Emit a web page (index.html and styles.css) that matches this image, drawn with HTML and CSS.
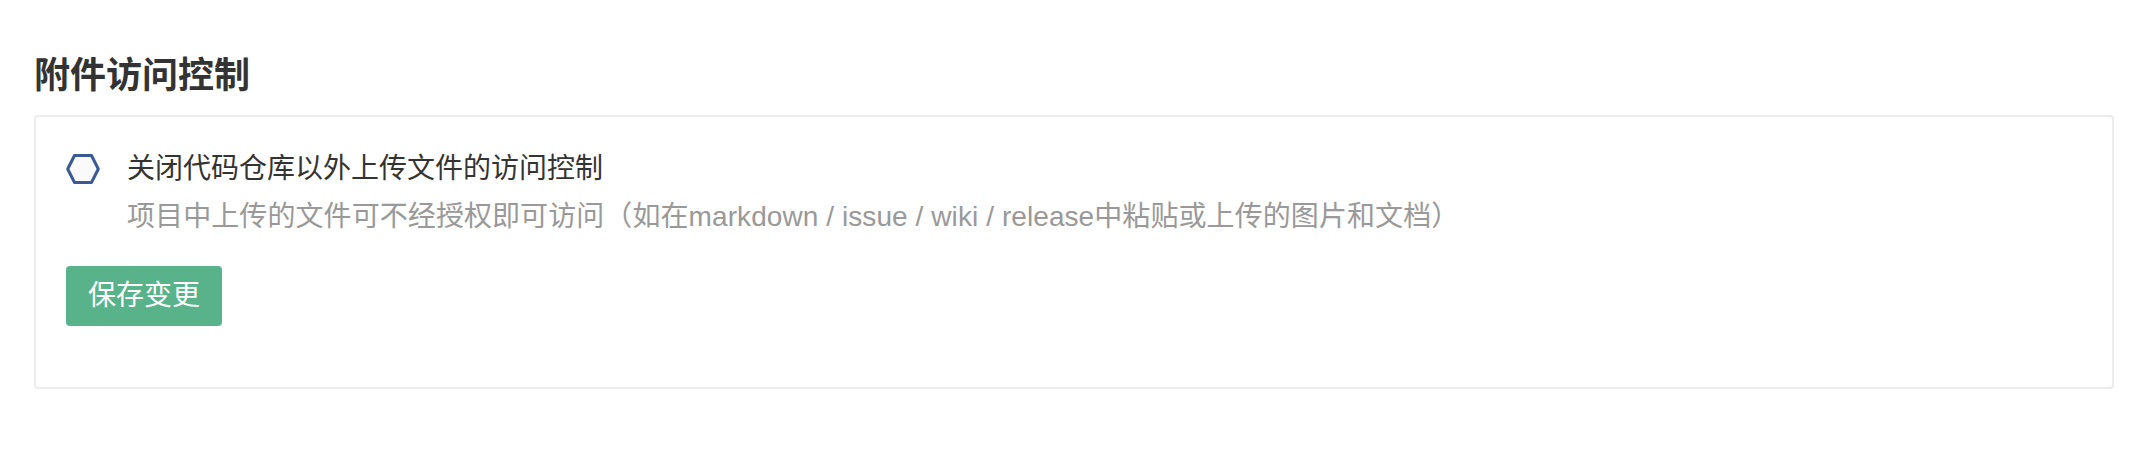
FILE: index.html
```html
<!DOCTYPE html>
<html lang="zh-CN">
<head>
    <meta charset="UTF-8">
    <meta name="viewport" content="width=device-width, initial-scale=1.0">
    <title>附件访问控制</title>
    <link rel="stylesheet" href="styles.css">
</head>
<body>
    <div class="page">
        <h2 class="section-title">附件访问控制</h2>
        <div class="panel">
            <label class="check-row">
                <svg class="hex" width="34" height="30" viewBox="0 0 34 30">
                    <polygon points="8.5,1.5 25.5,1.5 32.3,15 25.5,28.5 8.5,28.5 1.7,15" fill="#fafafa" stroke="#3a5a95" stroke-width="3" stroke-linejoin="round"/>
                </svg>
                <span class="check-text">关闭代码仓库以外上传文件的访问控制</span>
            </label>
            <p class="hint">项目中上传的文件可不经授权即可访问（如在markdown / issue / wiki / release中粘贴或上传的图片和文档）</p>
            <button class="btn-save">保存变更</button>
        </div>
    </div>
</body>
</html>
```

FILE: styles.css
```css
body { margin: 0; background-color: #fff; font-family: "Liberation Sans", "Noto Sans CJK SC", sans-serif; color: #333; }
.page { padding: 51px 34px; }
.section-title { margin: 0 0 14px; font-size: 36px; line-height: 50px; font-weight: bold; color: #333; }
.panel { border: 2px solid #ececec; border-radius: 4px; padding: 34px 30px 61px; }
.check-row { display: flex; align-items: center; height: 36px; cursor: pointer; }
.hex { display: block; flex: none; margin-right: 27px; }
.check-text { font-size: 28px; line-height: 36px; color: #333; }
.hint { margin: 12px 0 0; padding-left: 61px; font-size: 28px; line-height: 36px; color: #999; letter-spacing: 0.08px; }
.btn-save { display: block; margin-top: 31px; height: 60px; padding: 0 22px; border: none; border-radius: 4px; background-color: #58b38b; color: #fff; font-family: inherit; font-size: 28px; line-height: 60px; cursor: pointer; }
```
